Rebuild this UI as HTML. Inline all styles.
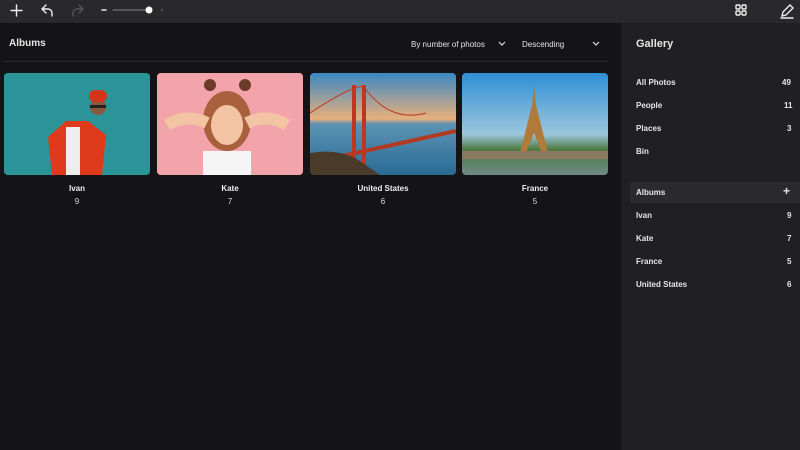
<!DOCTYPE html>
<html><head><meta charset="utf-8"><style>
*{margin:0;padding:0;box-sizing:border-box}
body{width:800px;height:450px;overflow:hidden;background:#141416;font-family:"Liberation Sans",sans-serif;color:#eee;position:relative}
.top{position:absolute;left:0;top:0;width:800px;height:23px;background:#29292b}
.main{position:absolute;left:0;top:23px;width:621px;height:427px;background:#141416}
.side{position:absolute;left:621px;top:23px;width:179px;height:427px;background:#202022}
.t{position:absolute;font-size:8px;color:#e6e6e6;white-space:nowrap}
.side2 .t{font-weight:600}
.card{position:absolute;top:73px;width:146px;height:102px;border-radius:4px;overflow:hidden}
.lbl{position:absolute;font-size:8px;font-weight:bold;text-align:center;width:146px}
.num{position:absolute;font-size:8px;text-align:center;width:146px;color:#ddd}
</style></head><body>
<div class="top"></div>
<svg style="position:absolute;left:0;top:0" width="800" height="23">
<g stroke="#eee" stroke-width="1.4" fill="none" stroke-linecap="round">
<path d="M11 10.5h11M16.5 5v11"/>
<path d="M42 9l4-4M42 9l4 4M42 9h6a4 4 0 0 1 4 4v3"/>
<path d="M83 9l-4-4M83 9l-4 4M83 9h-6a4 4 0 0 0-4 4v3" stroke="#555"/>
<path d="M102 10h4"/><path d="M113 10h34" stroke="#888" stroke-width="1"/>
<rect x="736" y="5" width="4" height="4" rx="1"/><rect x="742" y="5" width="4" height="4" rx="1"/>
<rect x="736" y="11" width="4" height="4" rx="1"/><rect x="742" y="11" width="4" height="4" rx="1"/>
<path d="M782 16l1-4 7-7 3 3-7 7-4 1zM781 18h12"/>
</g>
<circle cx="149" cy="10" r="3.5" fill="#fff"/><circle cx="162" cy="10" r="1" fill="#666"/>
</svg>
<div class="main"></div>
<div class="side"></div>
<div class="t" style="left:9px;top:38px;font-size:10px;font-weight:bold">Albums</div>
<div class="t" style="left:411px;top:40px">By number of photos</div>
<div class="t" style="left:522px;top:40px">Descending</div>
<svg style="position:absolute;left:0;top:0" width="620" height="60"><g stroke="#ddd" stroke-width="1.2" fill="none"><path d="M499 42l3 3 3-3M593 42l3 3 3-3"/></g></svg>
<div style="position:absolute;left:4px;top:61px;width:604px;height:1px;background:#2a2a2c"></div>

<div class="card" style="left:4px;background:#2f9ea3">
<svg width="146" height="102"><rect width="146" height="102" fill="#2b9499"/>
<path d="M48 102l-4-38 18-16h22l18 14-4 40z" fill="#e03a1c"/>
<path d="M76 102l0-48h-14v48z" fill="#eee"/>
<circle cx="94" cy="34" r="8" fill="#8a5a3e"/><rect x="85" y="17" width="18" height="12" rx="6" fill="#d63418"/>
<rect x="86" y="32" width="16" height="3" fill="#222"/></svg></div>
<div class="card" style="left:157px;background:#f4a7ad">
<svg width="146" height="102"><rect width="146" height="102" fill="#f3a4aa"/>
<circle cx="53" cy="12" r="6" fill="#6b3a28"/><circle cx="88" cy="12" r="6" fill="#6b3a28"/>
<ellipse cx="70" cy="48" rx="24" ry="30" fill="#a9603c"/><ellipse cx="70" cy="52" rx="16" ry="20" fill="#f2c4a4"/>
<path d="M10 52q20-12 40-2M130 52q-20-12-40-2" stroke="#f2c4a4" stroke-width="12" fill="none"/>
<path d="M46 102v-24h48v24z" fill="#f5f5f5"/></svg></div>
<div class="card" style="left:310px">
<svg width="146" height="102"><defs><linearGradient id="s1" x1="0" y1="0" x2="0" y2="1"><stop offset="0" stop-color="#3a88c4"/><stop offset=".45" stop-color="#e7b07c"/><stop offset=".5" stop-color="#5d93b4"/><stop offset="1" stop-color="#2a6b94"/></linearGradient></defs>
<rect width="146" height="102" fill="url(#s1)"/>
<path d="M0 90l146-32" stroke="#b23a22" stroke-width="4"/>
<rect x="42" y="12" width="4" height="80" fill="#c0361e"/><rect x="52" y="12" width="4" height="80" fill="#c0361e"/>
<path d="M0 40Q46 10 54 14Q80 50 116 40" stroke="#c0361e" fill="none"/>
<path d="M0 102l0-22q30-5 50 8l20 14z" fill="#4a3a2a"/></svg></div>
<div class="card" style="left:462px">
<svg width="146" height="102"><defs><linearGradient id="s2" x1="0" y1="0" x2="0" y2="1"><stop offset="0" stop-color="#2f8fd6"/><stop offset=".6" stop-color="#9cc6dc"/><stop offset=".75" stop-color="#4d7a40"/><stop offset="1" stop-color="#6f8a8a"/></linearGradient></defs>
<rect width="146" height="102" fill="url(#s2)"/>
<path d="M58 80l12-48 2-20 2 20 12 48h-6l-8-20-8 20z" fill="#b07a3a"/>
<rect x="0" y="78" width="146" height="8" fill="#8a7a60"/></svg></div>
<div class="lbl" style="left:4px;top:184px">Ivan</div><div class="num" style="left:4px;top:197px">9</div>
<div class="lbl" style="left:157px;top:184px">Kate</div><div class="num" style="left:157px;top:197px">7</div>
<div class="lbl" style="left:310px;top:184px">United States</div><div class="num" style="left:310px;top:197px">6</div>
<div class="lbl" style="left:462px;top:184px">France</div><div class="num" style="left:462px;top:197px">5</div>

<div class="side2">
<div class="t" style="left:636px;top:38px;font-size:11px;font-weight:bold">Gallery</div>
<div class="t" style="left:636px;top:78px">All Photos</div><div class="t" style="left:782px;top:78px">49</div>
<div class="t" style="left:636px;top:101px">People</div><div class="t" style="left:784px;top:101px">11</div>
<div class="t" style="left:636px;top:124px">Places</div><div class="t" style="left:787px;top:124px">3</div>
<div class="t" style="left:636px;top:147px">Bin</div>
<div style="position:absolute;left:630px;top:182px;width:170px;height:21px;background:#2b2b2d"></div>
<div class="t" style="left:636px;top:188px">Albums</div><div class="t" style="left:783px;top:184px;font-size:12px">+</div>
<div class="t" style="left:636px;top:211px">Ivan</div><div class="t" style="left:787px;top:211px">9</div>
<div class="t" style="left:636px;top:234px">Kate</div><div class="t" style="left:787px;top:234px">7</div>
<div class="t" style="left:636px;top:257px">France</div><div class="t" style="left:787px;top:257px">5</div>
<div class="t" style="left:636px;top:280px">United States</div><div class="t" style="left:787px;top:280px">6</div>
</div>
</body></html>
